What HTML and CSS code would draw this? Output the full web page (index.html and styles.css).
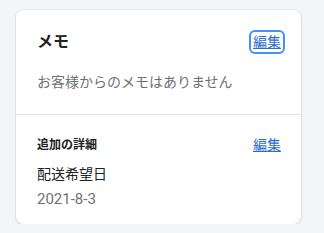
FILE: index.html
```html
<!DOCTYPE html>
<html lang="ja">
<head>
    <meta charset="UTF-8">
    <meta name="viewport" content="width=device-width, initial-scale=1.0">
    <title>メモ</title>
    <link rel="stylesheet" href="styles.css">
</head>
<body>
    <div class="card">
        <div class="card-section">
            <div class="card-header">
                <h2 class="card-title">メモ</h2>
                <button class="link-button focused" type="button">編集</button>
            </div>
            <p class="muted">お客様からのメモはありません</p>
        </div>
        <div class="card-section divided">
            <div class="card-header small">
                <h3 class="subheading">追加の詳細</h3>
                <button class="link-button" type="button">編集</button>
            </div>
            <div class="detail">
                <div class="detail-label">配送希望日</div>
                <div class="muted detail-value">2021-8-3</div>
            </div>
        </div>
    </div>
</body>
</html>
```

FILE: styles.css
```css
body {
    background-color: #f4f5f7; /* page background */
    margin: 0;
    font-family: Roboto, "Noto Sans CJK JP", sans-serif;
    color: #202223;
}

.card {
    background-color: #fff;
    width: 285px;
    margin: 10px 0 0 16px;
    border-radius: 8px;
    box-shadow: 0 0 0 1px rgba(63, 63, 68, 0.05), 0 1px 3px rgba(63, 63, 68, 0.15);
    overflow: hidden;
}

.card-section {
    padding: 20px 20px 22px 21px;
}

.card-section.divided {
    border-top: 1px solid #e1e3e5;
    padding-top: 20px;
    padding-bottom: 12px;
}

.card-header {
    display: flex;
    justify-content: space-between;
    align-items: center;
    height: 24px;
}

.card-header.small {
    height: 20px;
}

.card-title {
    margin: 0;
    font-size: 16px;
    font-weight: 700;
    line-height: 24px;
}

.subheading {
    margin: 0;
    font-size: 12px;
    font-weight: 700;
    line-height: 20px;
}

.link-button {
    background: none;
    border: none;
    padding: 0;
    font-family: inherit;
    font-size: 14px;
    line-height: 20px;
    color: #2c6ecb;
    text-decoration: underline;
    border-radius: 4px;
    cursor: pointer;
}

.link-button.focused {
    box-shadow: 0 0 0 2px #458fff;
    padding: 0 2px;
    margin-right: -2px;
}

.muted {
    margin: 0;
    font-size: 14px;
    line-height: 20px;
    color: #6d7175;
}

.card-section > .muted {
    margin-top: 18px;
}

.detail {
    margin-top: 7px;
}

.detail-label {
    font-size: 14px;
    line-height: 24px;
}

.detail-value {
    font-size: 15px;
    line-height: 26px;
}
```
